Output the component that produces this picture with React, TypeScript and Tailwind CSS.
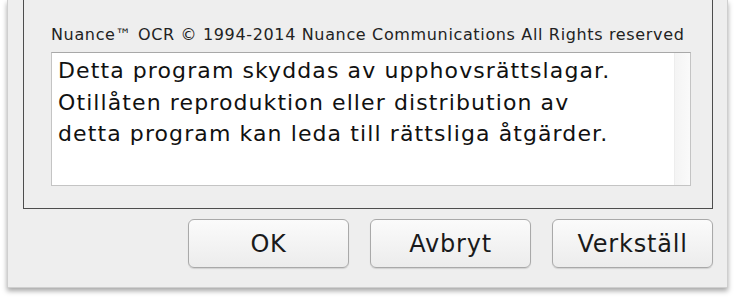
const font = { fontFamily: '"DejaVu Sans", "Liberation Sans", sans-serif' };

function DialogButton({ label }: { label: string }) {
  return (
    <button
      type="button"
      className="h-[49px] w-[161px] rounded-[6px] border border-[#a9a9a9] bg-gradient-to-b from-[#fbfbfb] to-[#ececec] text-[24px] leading-none tracking-[0.8px] text-[#1a1a1a] shadow-[0_1px_1px_rgba(0,0,0,0.12)]"
    >
      {label}
    </button>
  );
}

export default function App() {
  return (
    <div className="h-[302px] w-[738px] overflow-hidden bg-white" style={font}>
      <div className="ml-[7px] flex h-[288px] w-[721px] flex-col border-x border-b border-[#cfcfcf] bg-[#eeeeee] pl-[15px] pr-[14px] shadow-[0_3px_5px_rgba(0,0,0,0.35)]">
        {/* group box, its top edge is cut off */}
        <div className="h-[209px] border-x border-b border-[#4d4d4d] pl-[27px] pr-[21px]">
          <p className="pt-[26px] text-[16px] leading-[18px] tracking-[0.65px] text-[#222]">
            Nuance™ OCR © 1994-2014 Nuance Communications All Rights reserved
          </p>
          <div className="mt-[8px] flex h-[134px] border border-[#c4c4c4] border-t-[#a8a8a8] bg-white">
            <div className="flex-1 pl-[6px] pt-[2px] text-[22px] leading-[31.5px] tracking-[1.1px] text-[#111]">
              <div>Detta program skyddas av upphovsrättslagar.</div>
              <div>Otillåten reproduktion eller distribution av</div>
              <div>detta program kan leda till rättsliga åtgärder.</div>
            </div>
            <div className="w-[16px] border-l border-[#ededed] bg-gradient-to-r from-[#f4f4f4] to-[#fafafa]" />
          </div>
        </div>
        <div className="mt-[10px] flex justify-end gap-[21px]">
          <DialogButton label="OK" />
          <DialogButton label="Avbryt" />
          <DialogButton label="Verkställ" />
        </div>
      </div>
    </div>
  );
}
